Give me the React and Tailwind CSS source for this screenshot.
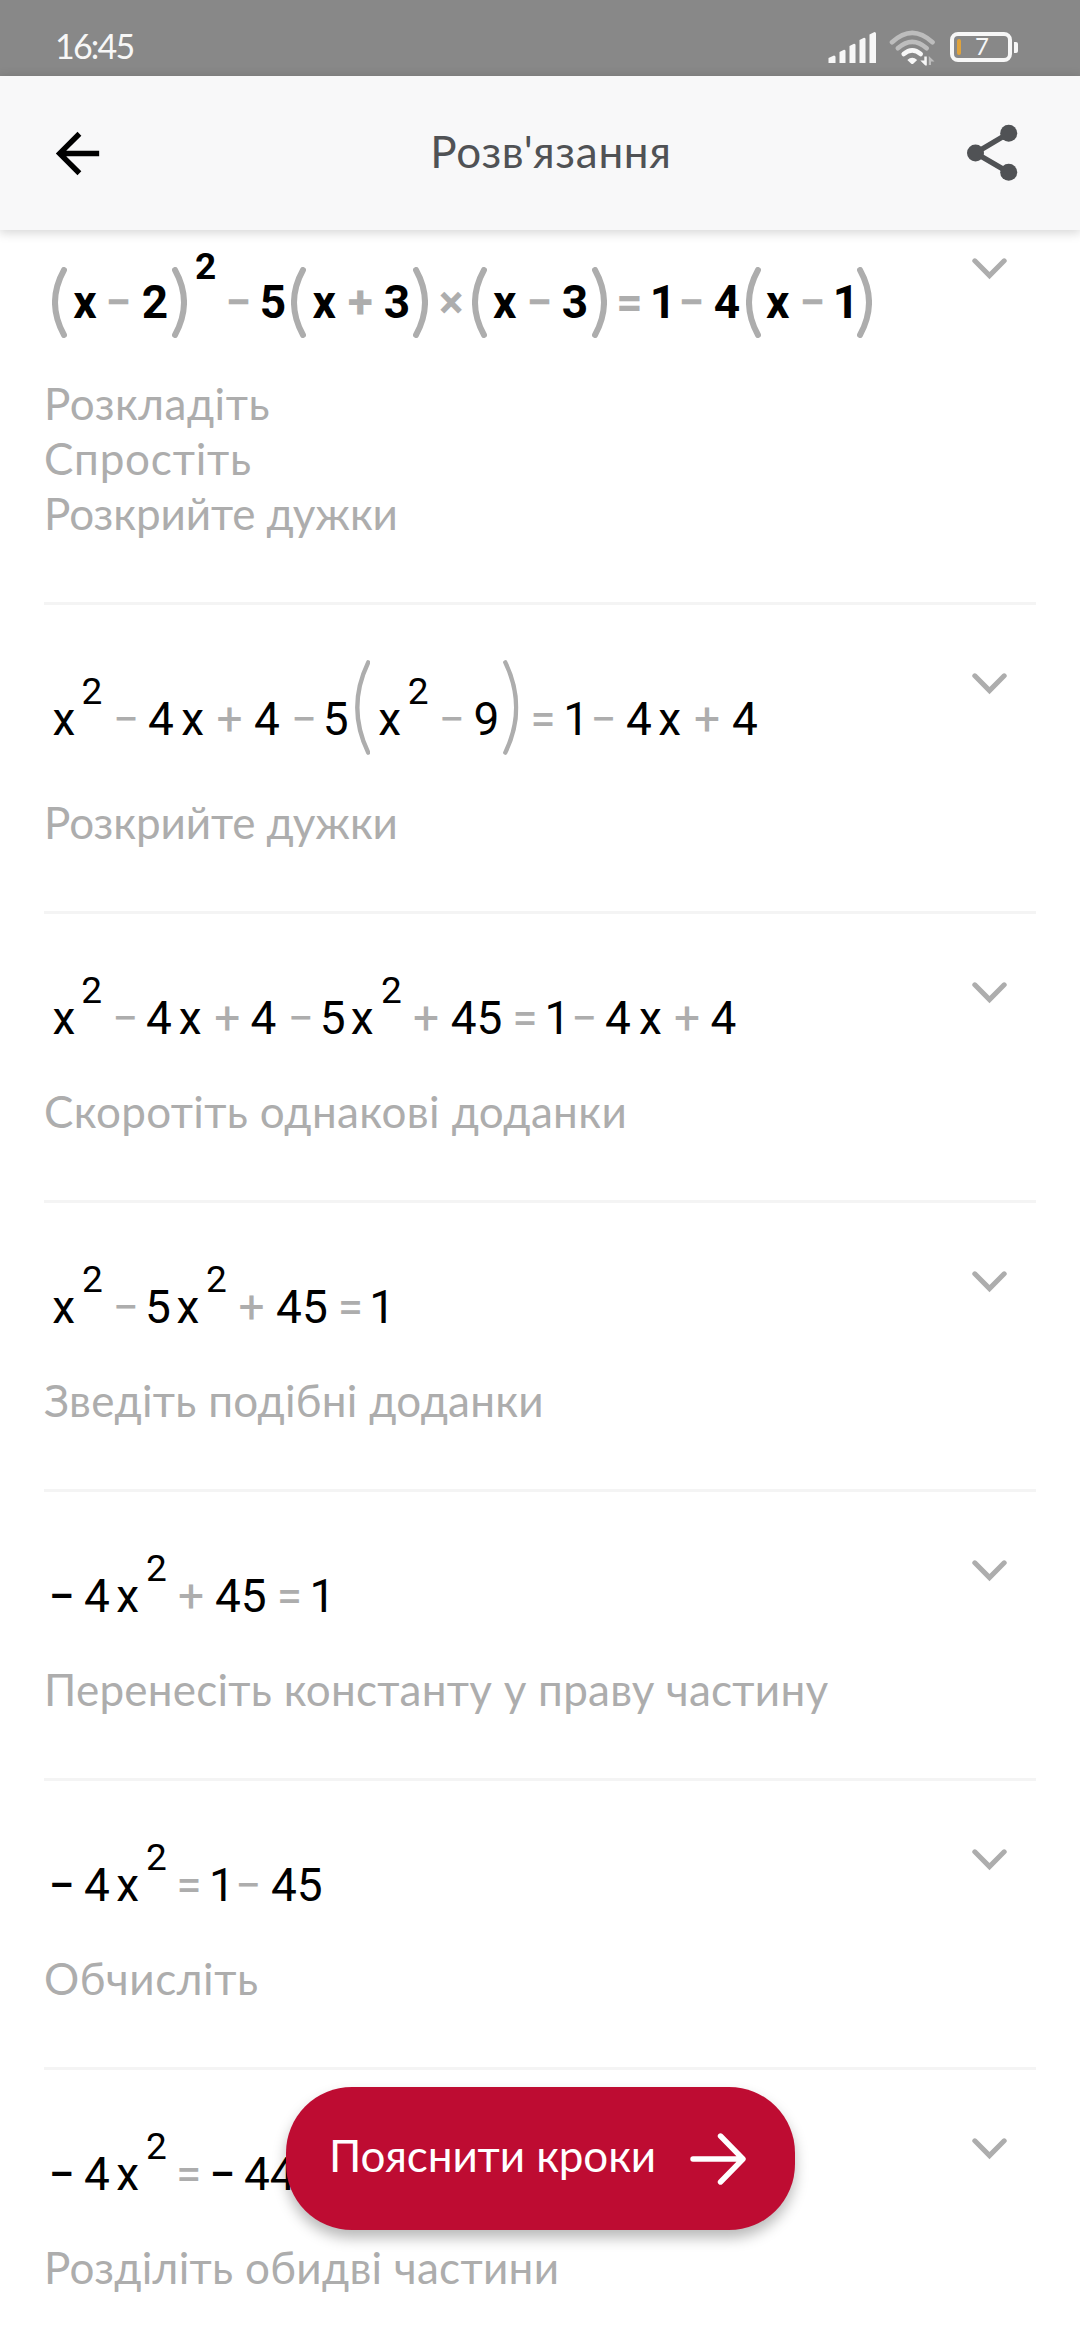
// each term is [glyph, advance in px]; '^' raises the glyph to an exponent,
// '~' marks a unary minus, which keeps the text colour
const steps = [
  {
    indent: 8,
    bold: true,
    terms: [
      ['(', 21.2], ['x', 32.6], ['−', 35.9], ['2', 30.8], [')', 22.5], ['^2', 30.8], ['−', 34], ['5', 31.7],
      ['(', 21], ['x', 35.2], ['+', 36.1], ['3', 29.7], [')', 25.7], ['×', 32.8],
      ['(', 21.2], ['x', 33.6], ['−', 35], ['3', 30.2], [')', 24.3], ['=', 33.7], ['1', 28.8], ['−', 35], ['4', 32.2],
      ['(', 20.2], ['x', 33.6], ['−', 33.2], ['1', 24], [')', 15],
    ],
    hints: [
      { text: 'Розкладіть', tracking: 'tracking-[0.5px]' },
      { text: 'Спростіть', tracking: 'tracking-[0.8px]' },
      { text: 'Розкрийте дужки', tracking: 'tracking-[-0.08px]' },
    ],
  },
  {
    indent: 8.4,
    tall: true,
    terms: [
      ['x', 29.2], ['^2', 31.1], ['−', 35.3], ['4', 33.3], ['x', 35.2], ['+', 37.5], ['4', 36.7], ['−', 32.1], ['5', 32.2],
      ['(', 23.3], ['x', 29.5], ['^2', 30.9], ['−', 35], ['9', 29.8], [')', 26.8], ['=', 33],
      ['1', 27], ['−', 35.7], ['4', 32.3], ['x', 35.7], ['+', 38], ['4', 26],
    ],
    hints: [{ text: 'Розкрийте дужки', tracking: 'tracking-[-0.08px]' }],
  },
  {
    indent: 8.4,
    terms: [
      ['x', 28.9], ['^2', 30.7], ['−', 34], ['4', 32.8], ['x', 35.4], ['+', 36.4], ['4', 36.9], ['−', 32.4], ['5', 30.9],
      ['x', 30.2], ['^2', 32], ['+', 37.8], ['45', 61.5], ['=', 32.2],
      ['1', 26.6], ['−', 33.9], ['4', 34.2], ['x', 35], ['+', 36.4], ['4', 26],
    ],
    hints: [{ text: 'Скоротіть однакові доданки', tracking: 'tracking-[0.37px]' }],
  },
  {
    indent: 8.3,
    terms: [
      ['x', 29.7], ['^2', 30.4], ['−', 32.7], ['5', 31.5], ['x', 29.4], ['^2', 32.6], ['+', 37.5], ['45', 61.6], ['=', 31.6], ['1', 26],
    ],
    hints: [{ text: 'Зведіть подібні доданки', tracking: 'tracking-[0.26px]' }],
  },
  {
    indent: 4.4,
    terms: [['~−', 35.6], ['4', 32.2], ['x', 29.8], ['^2', 32], ['+', 37], ['45', 61.8], ['=', 32.7], ['1', 26]],
    hints: [{ text: 'Перенесіть константу у праву частину', tracking: 'tracking-[0.25px]' }],
  },
  {
    indent: 4.4,
    terms: [['~−', 35.6], ['4', 32.3], ['x', 29.8], ['^2', 30.2], ['=', 32.8], ['1', 25.9], ['−', 36], ['45', 52]],
    hints: [{ text: 'Обчисліть', tracking: 'tracking-[0.6px]' }],
  },
  {
    indent: 4.4,
    terms: [['~−', 35.6], ['4', 32.3], ['x', 29.8], ['^2', 29.9], ['=', 33.2], ['~−', 34.8], ['44', 52]],
    hints: [{ text: 'Розділіть обидві частини', tracking: 'tracking-[0.3px]' }],
  },
];

function Paren({ close, tall }) {
  const flip = close ? '-scale-x-100' : '';
  if (tall) {
    return (
      <svg className={`inline-block w-[15.5px] h-[95px] align-[-20px] ${flip}`} viewBox="0 0 15.5 95" fill="none">
        <path d="M13.2 2.4Q-8.6 47.5 13.2 92.6" stroke="#adadad" strokeWidth="4.4" strokeLinecap="round" />
      </svg>
    );
  }
  return (
    <svg className={`inline-block w-[15px] h-[71px] align-[-20px] ${flip}`} viewBox="0 0 15 71" fill="none">
      <path d="M12 3Q-6 35.5 12 68" stroke="#adadad" strokeWidth="6" strokeLinecap="round" />
    </svg>
  );
}

function Term({ glyph, width, bold, tall }) {
  if (glyph === '(' || glyph === ')') {
    return (
      <span className="inline-block" style={{ width }}>
        <Paren close={glyph === ')'} tall={tall} />
      </span>
    );
  }
  if (glyph.startsWith('^')) {
    return (
      <sup
        className={`inline-block static text-[37px] leading-[0] ${bold ? 'align-[39px]' : 'align-[31px]'}`}
        style={{ width }}
      >
        {glyph.slice(1)}
      </sup>
    );
  }
  if (glyph.startsWith('~')) {
    return <span className="inline-block font-medium" style={{ width }}>{glyph.slice(1)}</span>;
  }
  const operator = '−+=×'.includes(glyph);
  return <span className={`inline-block ${operator ? 'text-[#adadad]' : ''}`} style={{ width }}>{glyph}</span>;
}

function Chevron() {
  return (
    <svg className="w-[35px] h-[22px]" viewBox="0 0 35 22" fill="none">
      <path d="M2.8 2.8 17.5 17.6 32.2 2.8" stroke="#adadad" strokeWidth="5" strokeLinecap="round" />
    </svg>
  );
}

function Step({ step, first }) {
  const eqHeight = step.tall ? 'h-[120px] pt-px' : first ? 'h-[108px]' : 'h-[100px]';
  return (
    <div className={`flex justify-between border-b-[3px] border-[#f4f4f4] pb-[61px] ${first ? 'pt-[22px]' : 'pt-[54px]'}`}>
      <div>
        <div
          className={`font-[Roboto,sans-serif] text-[46px] leading-[100px] text-black whitespace-nowrap ${eqHeight} ${step.bold ? 'font-bold' : 'font-normal'}`}
          style={{ paddingLeft: step.indent }}
        >
          {step.terms.map(([glyph, width], i) => (
            <Term key={i} glyph={glyph} width={width} bold={step.bold} tall={step.tall} />
          ))}
        </div>
        <div className="mt-[16px] text-[44px] leading-[55px] text-[#adadad] whitespace-nowrap">
          {step.hints.map((h) => (
            <p key={h.text} className={h.tracking}>{h.text}</p>
          ))}
        </div>
      </div>
      <button className={`self-start mr-[29px] ${first ? 'mt-[6px]' : 'mt-[14px]'}`}>
        <Chevron />
      </button>
    </div>
  );
}

function StatusBar() {
  return (
    <div className="flex h-[76px] bg-[#888888] text-[#f7f7f7]">
      <span className="ml-[55px] mt-[25px] text-[34px] leading-[42px] tracking-[-1.8px]">16:45</span>

      <svg className="ml-auto mt-[31px] w-[49px] h-[33px]" viewBox="0 0 49 33" fill="currentColor">
        <path d="M0.5 27 6 24.5Q7.5 24.5 7.5 26V32H0.5Z" />
        <path d="M11.5 21 16 18.7Q17.5 18.7 17.5 20V32H11.5Z" />
        <path d="M21.5 15 26 12.8Q27.5 12.8 27.5 14V32H21.5Z" />
        <path d="M31.5 9 36 6.8Q37.5 6.8 37.5 8V32H31.5Z" />
        <path d="M41.5 3.5 46.5 1Q48 1 48 2.5V32H41.5Z" />
      </svg>

      <svg className="ml-[12px] mt-[30px] w-[47px] h-[36px]" viewBox="0 0 47 36" fill="none">
        <g strokeWidth="4.6" strokeLinecap="round">
          <path d="M3 12.3Q23.2-6.5 43.5 12.3" stroke="#bdbdbd" />
          <path d="M8.8 18.3Q23.2 5.5 37.7 18.3" stroke="#bdbdbd" />
          <path d="M14.7 24Q23.2 16.8 31.7 24" stroke="#f7f7f7" />
        </g>
        <path d="M18.3 30Q23.2 25.3 28.2 30L24.5 33.5Q23.2 34.5 22 33.5Z" fill="#f7f7f7" />
        <path d="M35.3 26.5H37.8V35.5H36.3L31.3 30.5H35.3Z" fill="#f7f7f7" />
        <path d="M39.8 26 45.5 31.5H42V35H39.8Z" fill="#bdbdbd" />
      </svg>

      <div className="ml-[14px] mr-[62px] mt-[32px] flex h-[30px] items-center">
        <div className="flex h-[30px] w-[62px] items-center rounded-[8px] border-4 border-[#f7f7f7] pl-[3px]">
          <span className="h-[16px] w-[4px] rounded-[2px] bg-[#e0a33c]" />
          <span className="ml-[14px] pb-[3px] text-[24px] leading-[22px]">7</span>
        </div>
        <span className="ml-[2px] h-[11px] w-[4px] rounded-r-[2px] bg-[#f7f7f7]" />
      </div>
    </div>
  );
}

function Header() {
  return (
    <header className="relative z-10 flex h-[154px] items-center bg-[#f8f8f9] shadow-[0_2px_10px_1px_rgba(0,0,0,0.16)]">
      <button className="ml-[45px]">
        <svg className="w-[65px] h-[65px]" viewBox="0 0 24 24" fill="#000">
          <path d="M20 11H7.83l5.59-5.59L12 4l-8 8 8 8 1.41-1.41L7.83 13H20v-2z" />
        </svg>
      </button>
      <h1 className="flex-1 pb-[3px] pl-[26px] text-center text-[44px] leading-[55px] tracking-[0.7px] text-[#505255]">
        Розв'язання
      </h1>
      <button className="mr-[62px]">
        <svg className="w-[52px] h-[58px]" viewBox="0 0 52 58" fill="#505255">
          <path d="M42.7 9.3 9.5 29 42.7 48.3" fill="none" stroke="#505255" strokeWidth="5.4" />
          <circle cx="42.7" cy="9.3" r="8.5" />
          <circle cx="9.5" cy="29" r="8.5" />
          <circle cx="42.7" cy="48.3" r="8.5" />
        </svg>
      </button>
    </header>
  );
}

export default function App() {
  return (
    <div className="relative h-[2340px] w-[1080px] overflow-hidden bg-white font-[Lato,sans-serif]">
      <StatusBar />
      <Header />
      <main className="px-[44px]">
        {steps.map((step, i) => (
          <Step key={i} step={step} first={i === 0} />
        ))}
      </main>

      <button className="absolute left-[286px] top-[2087px] flex h-[143px] w-[509px] items-center rounded-[66px] bg-[#be0c32] pl-[43px] text-white shadow-[0_8px_14px_rgba(0,0,0,0.28)]">
        <span className="pb-[7px] text-[44px] leading-[55px] tracking-[-0.1px] whitespace-nowrap">Пояснити кроки</span>
        <svg className="ml-[34px] w-[56px] h-[52px]" viewBox="0 0 56 52" fill="none">
          <path d="M3 26H52M30.5 3 53 26 30.5 49" stroke="#fff" strokeWidth="5.4" strokeLinecap="round" strokeLinejoin="round" />
        </svg>
      </button>
    </div>
  );
}
